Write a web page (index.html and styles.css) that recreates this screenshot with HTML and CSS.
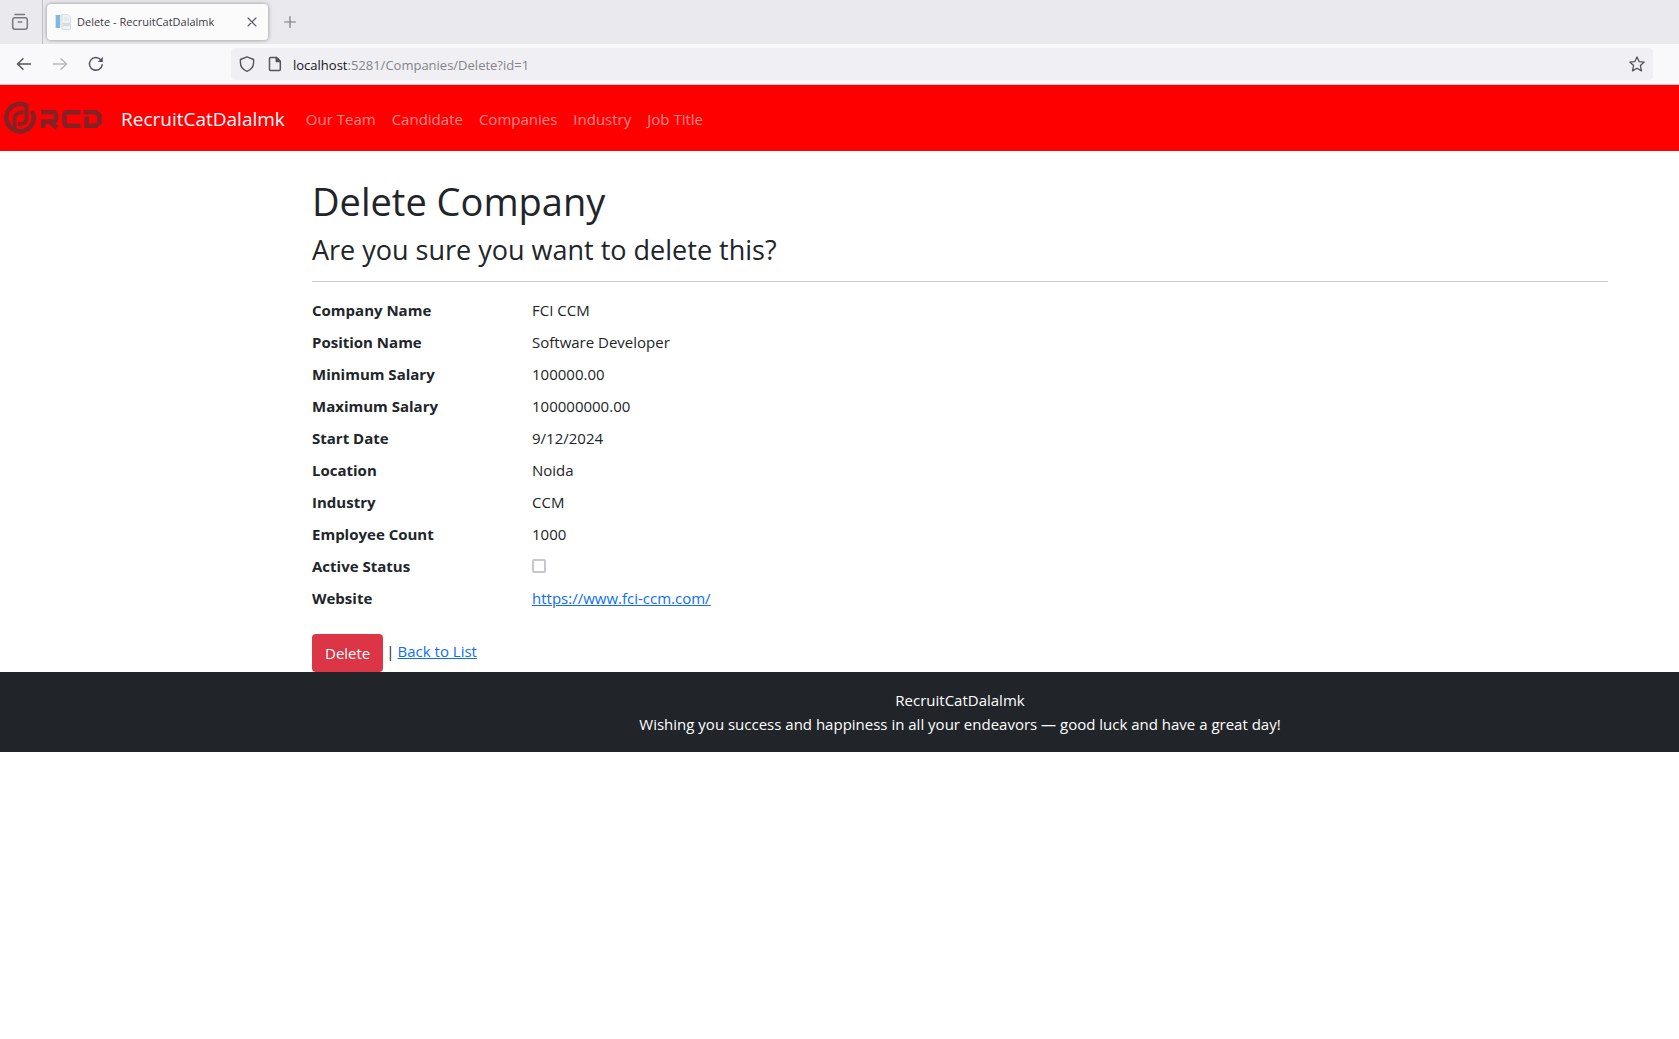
FILE: index.html
```html
<!DOCTYPE html>
<html lang="en">
<head>
<meta charset="utf-8">
<meta name="viewport" content="width=device-width, initial-scale=1">
<title>Delete - RecruitCatDalalmk</title>
<link rel="stylesheet" href="styles.css">
</head>
<body>
<div class="tabstrip">
  <button class="tab-history" type="button" aria-label="Recent browsing">
    <svg width="18" height="18" viewBox="0 0 18 18" fill="none" stroke="#7a7982" stroke-width="1.5" stroke-linecap="round"><path d="M4 1.6h9.500"/><rect x="1.700" y="4.700" width="14.600" height="11.500" rx="2.200"/><path d="M7.300 9h3.400"/></svg>
  </button>
  <div class="tab">
    <svg class="favicon" width="16" height="16" viewBox="0 0 16 16"><path d="M1 1h4v13H1z" fill="#80b7dc"/><path d="M0 1h1v13H0z" fill="#cfe3f0"/><path d="M5 1h6v13H5z" fill="#e4ecf2"/><path d="M7 .5h6l2.500 2.500v12.500H7z" fill="#f0f2f4" stroke="#d3d8dd" stroke-width=".8"/><path d="M8 9h7v3H8z" fill="#d5dbe0"/><path d="M9 4h4M9 6h5" stroke="#dbe0e5"/></svg>
    <span class="tab-title">Delete - RecruitCatDalalmk</span>
    <button class="tab-close" type="button" aria-label="Close tab">
      <svg width="10" height="10" viewBox="0 0 10 10" stroke="#55545c" stroke-width="1.100" stroke-linecap="round"><path d="M1 1l8 8M9 1l-8 8"/></svg>
    </button>
  </div>
  <button class="tab-new" type="button" aria-label="New tab">
    <svg width="12" height="12" viewBox="0 0 12 12" stroke="#7a7982" stroke-width="1.200" stroke-linecap="round"><path d="M6 .6v10.800M.6 6h10.800"/></svg>
  </button>
</div>
<div class="toolbar">
  <div class="nav-buttons">
    <button type="button" aria-label="Back"><svg width="16" height="16" viewBox="0 0 16 16" fill="none" stroke="#55545f" stroke-width="1.500" stroke-linecap="round" stroke-linejoin="round"><path d="M14.500 8H1.700M7 2.700L1.500 8 7 13.300"/></svg></button>
    <button type="button" aria-label="Forward" disabled><svg width="16" height="16" viewBox="0 0 16 16" fill="none" stroke="#bbbac0" stroke-width="1.500" stroke-linecap="round" stroke-linejoin="round"><path d="M1.500 8h12.800M9 2.700L14.500 8 9 13.300"/></svg></button>
    <button type="button" aria-label="Reload"><svg width="16" height="16" viewBox="0 0 16 16" fill="none" stroke="#55545f" stroke-width="1.500" stroke-linecap="round"><path d="M14.200 8.800A6.400 6.400 0 1 1 12.800 3.800"/><path d="M14.800 1v5h-5z" fill="#55545f" stroke="none"/></svg></button>
  </div>
  <div class="urlbar">
    <svg width="16" height="16" viewBox="0 0 16 16" fill="none" stroke="#55545c" stroke-width="1.400" stroke-linejoin="round"><path d="M8 .9L14.600 3.500V6.500C14.600 10.600 12.200 13.700 8 15.300 3.800 13.700 1.400 10.600 1.400 6.500V3.500z"/></svg>
    <svg width="16" height="16" viewBox="0 0 16 16" fill="none" stroke="#55545c" stroke-width="1.500" stroke-linejoin="round"><path d="M3.500 1.500H9.500L13.300 5.300V13.500a1 1 0 0 1-1 1H3.500a1 1 0 0 1-1-1V2.500a1 1 0 0 1 1-1z"/><path d="M9.300 1.500V5.500H13.300z" fill="#55545c"/></svg>
    <span class="url"><span class="host">localhost</span>:5281/Companies/Delete?id=1</span>
    <button type="button" aria-label="Bookmark this page"><svg width="16" height="16" viewBox="0 0 16 16" fill="none" stroke="#55545c" stroke-width="1.300" stroke-linejoin="round"><path d="M8 .9L10.100 5.600 15.200 6.100 11.400 9.600 12.500 14.900 8 12.200 3.500 14.900 4.600 9.600 .8 6.100 5.900 5.600z"/></svg></button>
  </div>
</div>
<header class="navbar">
  <a class="logo" href="#" aria-label="RCD">
    <svg width="99" height="34" viewBox="0 0 99 34" fill="none" stroke="#822226" stroke-width="4.600"><path d="M22.500 4.600A13.700 13.700 0 1 0 28 10"/><path d="M22.500 3V17.500A5.500 5.500 0 0 1 17 23H14" stroke-width="4"/><path d="M19.500 11.500H16.500A6 6 0 0 0 10.500 17.500V29" stroke-width="4"/><path d="M39.300 27V20.500H49.500A2.500 2.500 0 0 0 52 18V13.800A2.500 2.500 0 0 0 49.500 11.300H37M46 20.500L53 27"/><path d="M76.500 11.300H63A2.500 2.500 0 0 0 60.500 13.800V22.300A2.500 2.500 0 0 0 63 24.800H76.500"/><path d="M79.500 11.300H92L95.500 14.500V21.500L92 24.800H82.500V15.500"/></svg>
  </a>
  <a class="brand" href="#">RecruitCatDalalmk</a>
  <nav class="nav-links">
    <a href="#">Our Team</a>
    <a href="#">Candidate</a>
    <a href="#">Companies</a>
    <a href="#">Industry</a>
    <a href="#">Job Title</a>
  </nav>
</header>
<main class="container content">
  <h1>Delete Company</h1>
  <h2>Are you sure you want to delete this?</h2>
  <hr>
  <dl class="details">
    <dt>Company Name</dt><dd>FCI CCM</dd>
    <dt>Position Name</dt><dd>Software Developer</dd>
    <dt>Minimum Salary</dt><dd>100000.00</dd>
    <dt>Maximum Salary</dt><dd>100000000.00</dd>
    <dt>Start Date</dt><dd>9/12/2024</dd>
    <dt>Location</dt><dd>Noida</dd>
    <dt>Industry</dt><dd>CCM</dd>
    <dt>Employee Count</dt><dd>1000</dd>
    <dt><label for="active">Active Status</label></dt><dd class="check"><input id="active" type="checkbox" disabled></dd>
    <dt>Website</dt><dd><a href="#">https://www.fci-ccm.com/</a></dd>
  </dl>
  <form class="actions">
    <button class="btn-danger" type="button">Delete</button>
    <span>|</span>
    <a href="#">Back to List</a>
  </form>
</main>
<footer class="footer">
  <div class="container">
    <p>RecruitCatDalalmk</p>
    <p>Wishing you success and happiness in all your endeavors — good luck and have a great day!</p>
  </div>
</footer>
</body>
</html>
```
FILE: styles.css
```css
* { box-sizing: border-box; }
body {
  margin: 0;
  background: #fff;
  color: #212529;
  font-family: "Segoe UI", "Open Sans", "Noto Sans", sans-serif;
  font-size: 15px;
  line-height: 24px;
}
button { font: inherit; border: 0; padding: 0; background: none; }
svg { display: block; flex: none; }
a { color: #0d6efd; }

.tabstrip {
  display: flex;
  align-items: center;
  height: 44px;
  background: #eae9ed;
}
.tab-history {
  display: grid;
  place-items: center;
  width: 43px;
  height: 44px;
  padding-right: 3px;
  border-right: 1px solid #bfbfc5;
}
.tab {
  display: flex;
  align-items: center;
  width: 221px;
  height: 36px;
  margin-left: 4px;
  padding: 0 8px;
  border-radius: 4px;
  background: #fbfbfc;
  box-shadow: 0 0 4px rgba(0, 0, 0, .4);
}
.tab-title {
  flex: 1;
  margin-left: 6px;
  color: #3b3a42;
  font-size: 11px;
  white-space: nowrap;
}
.tab-close { padding: 3px; }
.tab-new { margin-left: 16px; }

.toolbar {
  display: flex;
  align-items: center;
  height: 41px;
  padding-right: 26px;
  border-bottom: 1px solid #c8c8cd;
  background: #f9f9fb;
}
.nav-buttons {
  display: flex;
  gap: 20px;
  width: 231px;
  padding-left: 16px;
}
.urlbar {
  display: flex;
  flex: 1;
  align-items: center;
  gap: 12px;
  height: 32px;
  padding: 0 8px;
  border-radius: 4px;
  background: #f0f0f4;
}
.url { flex: 1; margin-left: -2px; padding-top: 2px; color: #84838a; font-size: 13px; }
.host { color: #15141a; }

.navbar {
  display: flex;
  align-items: center;
  height: 66px;
  padding-left: 4px;
  background: #f00;
}
.brand {
  margin-left: 18px;
  padding-top: 2px;
  color: #fff;
  font-size: 19px;
  text-decoration: none;
}
.nav-links { display: flex; gap: 16px; margin-left: 21px; padding-top: 2px; }
.nav-links a { color: rgba(255, 255, 255, .55); text-decoration: none; }

.container {
  max-width: 1320px;
  margin-left: 300px;
  padding: 0 12px;
}
.content { padding-top: 26px; }
h1, h2 { margin: 0 0 8px; font-weight: 400; }
h1 { font-size: 38px; line-height: 48px; }
h2 { font-size: 27px; line-height: 34px; }
hr { margin: 14px 0 16px; border: 0; border-top: 1px solid #c8c9ca; }

.details {
  display: grid;
  grid-template-columns: 220px 1fr;
  row-gap: 8px;
  margin: 0 0 24px;
}
dt { font-weight: 700; }
dd { margin: 0; }
.check { display: flex; align-items: center; }
.check input {
  appearance: none;
  width: 14px;
  height: 14px;
  margin: 0;
  border: 2px solid #c7c7cc;
  border-radius: 2px;
  background: #fff;
}

.actions { display: flex; align-items: flex-start; gap: 3px; line-height: 34px; }
.btn-danger {
  height: 38px;
  padding: 0 13px;
  border-radius: 4px;
  background: #dc3545;
  color: #fff;
}

.footer {
  padding: 16px 0;
  background: #212529;
  color: #fff;
  text-align: center;
}
.footer p { margin: 0; }
```
